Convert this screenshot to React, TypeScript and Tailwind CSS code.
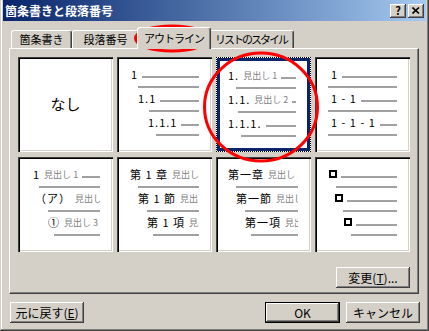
import type { ReactNode } from 'react';

// 行頭のテキスト + 短い線、その下に長い線
function Level({ textCls, lineCls, children, tail = true }: { textCls: string; lineCls: string; children: ReactNode; tail?: boolean }) {
  return (
    <div className="mb-[3px]">
      <div className={`flex h-[14px] items-center whitespace-nowrap ${textCls}`}>
        {children}
        {tail && <div className="ml-[4px] mt-[6px] h-[2px] min-w-0 flex-1 bg-[#a0a0a0]" />}
      </div>
      <div className={`mt-[5px] h-[2px] bg-[#a0a0a0] ${lineCls}`} />
    </div>
  );
}

const Num = ({ children }: { children: ReactNode }) => (
  <span className="shrink-0 text-[11px] leading-none tracking-[1px] text-black">{children}</span>
);
const Heading = ({ children }: { children: ReactNode }) => (
  <span className="ml-[4px] shrink-0 text-[9px] leading-none text-[#808080]">{children}</span>
);
const Box = () => <span className="h-[8px] w-[8px] shrink-0 border-2 border-black" />;

function Cell({ children }: { children: ReactNode }) {
  return (
    <div className="h-[95px] w-[95px] bg-white shadow-[inset_1px_1px_0_#404040,inset_2px_2px_0_#000,inset_-1px_-1px_0_#fff,inset_-2px_-2px_0_#d4d0c8]">
      <div className="ml-[2px] w-[80px] overflow-hidden pt-[10px]">{children}</div>
    </div>
  );
}

const raised =
  'bg-[#d4d0c8] shadow-[inset_-1px_-1px_0_#404040,inset_1px_1px_0_#fff,inset_-2px_-2px_0_#808080]';
const tab =
  'flex h-[18px] items-center justify-center whitespace-nowrap rounded-t-[3px] border-r border-t border-white border-r-[#404040] shadow-[inset_-1px_0_0_#808080]';

export default function App() {
  return (
    <div className="relative h-[331px] w-[429px] overflow-hidden bg-[#d4d0c8] px-[3px] font-['Noto_Sans_CJK_JP',sans-serif] text-black shadow-[inset_-1px_-1px_0_#404040,inset_1px_0_0_#d4d0c8,inset_-2px_-2px_0_#808080,inset_2px_0_0_#fff]">
      {/* タイトルバー */}
      <div className="flex h-[21px] items-center bg-gradient-to-r from-[#0a246a] to-[#a6caf0] pl-[2px] pr-[2px]">
        <span className="flex-1 text-[12px] font-bold leading-none text-white">箇条書きと段落番号</span>
        <div className={`flex h-[14px] w-[16px] items-center justify-center text-[11px] font-bold leading-none ${raised}`}>?</div>
        <div className={`ml-[2px] flex h-[14px] w-[16px] items-center justify-center ${raised}`}>
          <svg width="8" height="7" viewBox="0 0 8 7">
            <path d="M0.5 0.5 L7 6.5 M7 0.5 L0.5 6.5" stroke="#000" strokeWidth="1.6" />
          </svg>
        </div>
      </div>

      {/* タブ */}
      <div className="ml-[8px] mt-[6px] flex h-[21px] items-end text-[11px] leading-none">
        <div className={`w-[61px] border-l ${tab}`}>箇条書き</div>
        <div className={`w-[67px] border-l ${tab}`}>段落番号</div>
        <div className="relative z-10 -mx-[2px] mb-[-1px] flex h-[22px] w-[74px] items-start justify-center whitespace-nowrap rounded-t-[3px] border-l border-r border-t border-white border-r-[#404040] bg-[#d4d0c8] pt-[5px] tracking-[-1px] shadow-[inset_-1px_0_0_#808080]">
          アウトライン
        </div>
        <div className={`w-[85px] tracking-[-2px] ${tab}`}>リストのスタイル</div>
      </div>

      {/* タブパネル */}
      <div className="ml-[6px] flex h-[246px] w-[410px] flex-col border-b border-l border-r border-t border-white border-b-[#404040] border-r-[#404040] pl-[8px] pt-[8px] shadow-[inset_-1px_-1px_0_#808080]">
        <div className="grid grid-cols-[repeat(4,95px)] gap-x-[4px] gap-y-[5px]">
          <div className="flex h-[95px] w-[95px] items-center justify-center bg-white text-[15px] shadow-[inset_1px_1px_0_#404040,inset_2px_2px_0_#000,inset_-1px_-1px_0_#fff,inset_-2px_-2px_0_#d4d0c8]">
            なし
          </div>
          <Cell>
            <Level textCls="pl-[12px]" lineCls="ml-[19px]"><Num>1</Num></Level>
            <Level textCls="pl-[19px]" lineCls="ml-[30px]"><Num>1.1</Num></Level>
            <Level textCls="pl-[29px]" lineCls="ml-[37px]"><Num>1.1.1</Num></Level>
          </Cell>
          {/* 選択中のセル */}
          <div className="h-[95px] w-[95px] border border-dotted border-black bg-white">
            <div className="h-full w-full border-[3px] border-[#0a246a]">
              <div className="w-[76px] overflow-hidden pt-[7px]">
                <Level textCls="pl-[8px]" lineCls="ml-[16px]"><Num>1.</Num><Heading>見出し 1</Heading></Level>
                <Level textCls="pl-[8px]" lineCls="ml-[18px]"><Num>1.1.</Num><Heading>見出し 2</Heading></Level>
                <Level textCls="pl-[8px]" lineCls="ml-[21px]"><Num>1.1.1.</Num></Level>
              </div>
            </div>
          </div>
          <Cell>
            <Level textCls="pl-[14px]" lineCls="ml-[11px]"><Num>1</Num></Level>
            <Level textCls="pl-[14px]" lineCls="ml-[11px]"><Num>1 - 1</Num></Level>
            <Level textCls="pl-[14px]" lineCls="ml-[11px]"><Num>1 - 1 - 1</Num></Level>
          </Cell>

          <Cell>
            <Level textCls="pl-[13px]" lineCls="ml-[19px]"><Num>1</Num><Heading>見出し 1</Heading></Level>
            <Level textCls="pl-[15px]" lineCls="ml-[28px]" tail={false}><Num>（ア）</Num><Heading>見出し 2</Heading></Level>
            <Level textCls="pl-[28px]" lineCls="ml-[34px]" tail={false}><Num>①</Num><Heading>見出し 3</Heading></Level>
          </Cell>
          <Cell>
            <Level textCls="pl-[11px]" lineCls="ml-[19px]" tail={false}><Num>第 1 章</Num><Heading>見出し 1</Heading></Level>
            <Level textCls="pl-[19px]" lineCls="ml-[28px]" tail={false}><Num>第 1 節</Num><Heading>見出し 2</Heading></Level>
            <Level textCls="pl-[28px]" lineCls="ml-[34px]" tail={false}><Num>第 1 項</Num><Heading>見出し 3</Heading></Level>
          </Cell>
          <Cell>
            <Level textCls="pl-[10px]" lineCls="ml-[18px]" tail={false}><Num>第一章</Num><Heading>見出し 1</Heading></Level>
            <Level textCls="pl-[18px]" lineCls="ml-[27px]" tail={false}><Num>第一節</Num><Heading>見出し 2</Heading></Level>
            <Level textCls="pl-[27px]" lineCls="ml-[33px]" tail={false}><Num>第一項</Num><Heading>見出し 3</Heading></Level>
          </Cell>
          <Cell>
            <Level textCls="pl-[12px]" lineCls="ml-[19px]"><Box /></Level>
            <Level textCls="pl-[18px]" lineCls="ml-[26px]"><Box /></Level>
            <Level textCls="pl-[27px]" lineCls="ml-[34px]"><Box /></Level>
          </Cell>
        </div>
        <div className="mr-[8px] mt-[15px] flex justify-end">
          <button type="button" className={`h-[21px] w-[74px] text-[12px] leading-none ${raised}`}>
            変更(<span className="underline">T</span>)...
          </button>
        </div>
      </div>

      {/* 下のボタン */}
      <div className="mt-[8px] flex items-center pl-[7px] text-[12px] leading-none">
        <button type="button" className={`h-[21px] w-[74px] ${raised}`}>
          元に戻す(<span className="underline">E</span>)
        </button>
        <div className="flex-1" />
        <button type="button" className={`h-[21px] w-[75px] border border-black ${raised}`}>OK</button>
        <button type="button" className={`ml-[6px] mr-[6px] h-[21px] w-[74px] ${raised}`}>キャンセル</button>
      </div>

      {/* 赤丸 */}
      <svg className="pointer-events-none absolute left-0 top-0" width="429" height="331">
        <ellipse cx="172" cy="38.5" rx="36.5" ry="12.5" fill="none" stroke="#ff0000" strokeWidth="3" />
        <ellipse cx="261" cy="107" rx="56.5" ry="54" fill="none" stroke="#ff0000" strokeWidth="3" />
      </svg>
    </div>
  );
}
